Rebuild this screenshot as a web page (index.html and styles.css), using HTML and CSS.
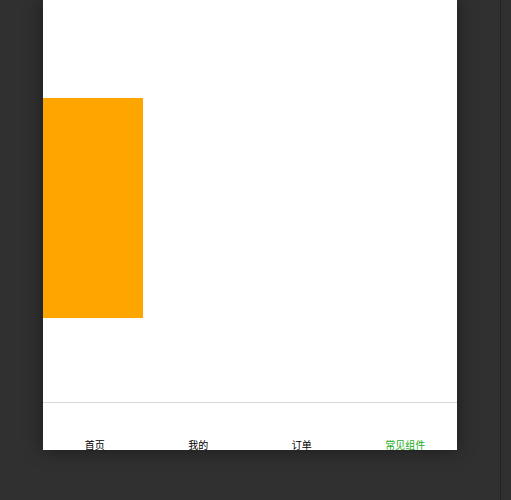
FILE: index.html
```html
<!DOCTYPE html>
<html lang="zh">
<head>
    <meta charset="UTF-8">
    <meta name="viewport" content="width=device-width, initial-scale=1.0">
    <title>常见组件</title>
    <link rel="stylesheet" href="styles.css">
</head>
<body>
    <div class="screen">
        <div class="page">
            <div class="block"></div>
        </div>

        <!-- 底部导航 -->
        <div class="tabbar">
            <div class="tab">首页</div>
            <div class="tab">我的</div>
            <div class="tab">订单</div>
            <div class="tab active">常见组件</div>
        </div>
    </div>
    <div class="spacer"></div>
    <div class="edge"></div>
</body>
</html>
```

FILE: styles.css
```css
body {
    margin: 0;
    height: 500px;
    display: flex;
    background: #303030;
    font-family: "Noto Sans CJK SC", "Liberation Sans", sans-serif;
    overflow: hidden;
}

.screen {
    width: 414px;
    height: 450px;
    margin-left: 43px;
    background: #fff;
    display: flex;
    flex-direction: column;
    box-shadow: 0 0 18px rgba(0, 0, 0, 0.45);
    overflow: hidden;
}

.page {
    flex: 1;
    padding-top: 98px;
}

.block {
    width: 100px;
    height: 220px;
    background: #ffa500;
}

.tabbar {
    height: 47px;
    border-top: 1px solid #d9d9d9;
    display: flex;
}

.tab {
    flex: 1;
    text-align: center;
    font-size: 10px;
    line-height: 14px;
    padding-top: 35px;
    color: #000;
}

.tab.active {
    color: #1aad19;
}

.spacer {
    flex: 1;
}

.edge {
    width: 1px;
    margin-right: 10px;
    background: #242424;
}
```
